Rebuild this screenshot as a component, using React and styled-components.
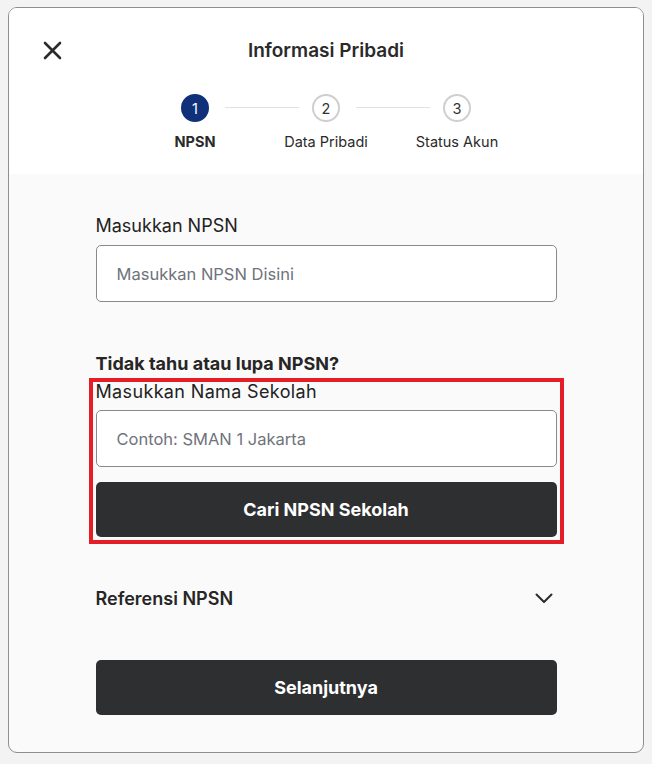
import React from "react";
import styled, { createGlobalStyle } from "styled-components";

const Global = createGlobalStyle`
  * { box-sizing: border-box; }
  html, body { margin: 0; padding: 0; background: #f3f3f3; }
  body { font-family: Inter, "Noto Sans", Arial, sans-serif; color: #222; }
`;

const Page = styled.div`
  padding: 7px 8px 11px;
`;

const Card = styled.div`
  border: 1px solid #8e8e8e;
  border-radius: 9px;
  overflow: hidden;
  background: #fafafa;
`;

const Header = styled.header`
  background: #fff;
  padding: 30px 0 22px;
`;

const TitleRow = styled.div`
  display: grid;
  grid-template-columns: 80px 1fr 80px;
  align-items: center;
  height: 24px;
`;

const CloseButton = styled.button`
  justify-self: start;
  margin-left: 33px;
  width: 20px;
  height: 20px;
  padding: 0;
  border: 0;
  background: none;
  display: flex;
  align-items: center;
  justify-content: center;
  color: #2b2b2b;
  cursor: pointer;
`;

const Title = styled.h1`
  margin: 0;
  text-align: center;
  font-size: 19px;
  font-weight: 600;
  color: #2a2a2a;
`;

const Steps = styled.ol`
  list-style: none;
  margin: 32px 0 0;
  padding: 0;
  display: flex;
  justify-content: center;
`;

const Step = styled.li`
  position: relative;
  width: 131px;
  display: flex;
  flex-direction: column;
  align-items: center;
  gap: 10px;

  &:not(:last-child)::after {
    content: "";
    position: absolute;
    top: 13px;
    left: calc(50% + 30px);
    width: 74px;
    height: 1px;
    background: #e2e2e2;
  }
`;

const Dot = styled.span`
  width: 28px;
  height: 28px;
  border-radius: 50%;
  display: flex;
  align-items: center;
  justify-content: center;
  font-size: 14.5px;
  background: ${(p) => (p.$active ? "#10317a" : "#fff")};
  color: ${(p) => (p.$active ? "#fff" : "#333")};
  border: 2px solid ${(p) => (p.$active ? "#10317a" : "#cfcfcf")};
`;

const StepLabel = styled.span`
  font-size: 14.5px;
  line-height: 20px;
  font-weight: ${(p) => (p.$active ? 700 : 400)};
  color: #2a2a2a;
`;

const Body = styled.main`
  width: 461px;
  margin: 0 auto;
  padding: 40px 0 37px;
  display: flex;
  flex-direction: column;
`;

const Label = styled.label`
  display: block;
  font-size: 18px;
  line-height: 24px;
  color: #222;
`;

const Input = styled.input`
  display: block;
  width: 100%;
  height: 57px;
  margin-top: ${(p) => p.$gap || 7}px;
  padding: 0 20px;
  border: 1px solid #8a8a8e;
  border-radius: 5px;
  background: #fff;
  font-family: inherit;
  font-size: 16.5px;
  color: #222;
  outline: none;

  &::placeholder {
    color: #70737c;
  }
`;

const Question = styled.p`
  margin: 50px 0 0;
  font-size: 18px;
  line-height: 24px;
  font-weight: 700;
  color: #262626;
`;

const SchoolSearch = styled.section`
  margin-top: 9px;
  outline: 4px solid #e51d26;
  outline-offset: 3px;
  display: flex;
  flex-direction: column;
`;

const SchoolLabel = styled(Label)`
  line-height: 14px;
  letter-spacing: 0.35px;
`;

const PrimaryButton = styled.button`
  display: flex;
  align-items: center;
  justify-content: center;
  width: 100%;
  height: 55px;
  margin-top: ${(p) => p.$gap}px;
  border: 0;
  border-radius: 5px;
  background: #2e2f31;
  color: #fff;
  font-family: inherit;
  font-size: 18px;
  font-weight: 700;
  cursor: pointer;
`;

const Accordion = styled.button`
  margin-top: 49px;
  display: flex;
  align-items: center;
  justify-content: space-between;
  width: 100%;
  height: 24px;
  padding: 0 4px 0 0;
  border: 0;
  background: none;
  font-family: inherit;
  font-size: 18px;
  font-weight: 600;
  color: #262626;
  cursor: pointer;
`;

const Chevron = () => (
  <svg width="18" height="11" viewBox="0 0 18 11" fill="none">
    <path d="M1.5 1.5L9 9l7.5-7.5" stroke="#2b2b2b" strokeWidth="2" strokeLinecap="round" strokeLinejoin="round" />
  </svg>
);

const CloseIcon = () => (
  <svg width="19" height="19" viewBox="0 0 19 19" fill="none">
    <path d="M2 2l15 15M17 2L2 17" stroke="currentColor" strokeWidth="2.6" strokeLinecap="round" />
  </svg>
);

const steps = [
  { n: 1, label: "NPSN", active: true },
  { n: 2, label: "Data Pribadi" },
  { n: 3, label: "Status Akun" },
];

export default function App() {
  return (
    <>
      <Global />
      <Page>
        <Card>
          <Header>
            <TitleRow>
              <CloseButton aria-label="Tutup">
                <CloseIcon />
              </CloseButton>
              <Title>Informasi Pribadi</Title>
              <span />
            </TitleRow>
            <Steps>
              {steps.map((s) => (
                <Step key={s.n}>
                  <Dot $active={s.active}>{s.n}</Dot>
                  <StepLabel $active={s.active}>{s.label}</StepLabel>
                </Step>
              ))}
            </Steps>
          </Header>
          <Body>
            <Label htmlFor="npsn">Masukkan NPSN</Label>
            <Input id="npsn" placeholder="Masukkan NPSN Disini" />
            <Question>Tidak tahu atau lupa NPSN?</Question>
            <SchoolSearch>
              <SchoolLabel htmlFor="sekolah">Masukkan Nama Sekolah</SchoolLabel>
              <Input id="sekolah" $gap={11} placeholder="Contoh: SMAN 1 Jakarta" />
              <PrimaryButton $gap={15}>Cari NPSN Sekolah</PrimaryButton>
            </SchoolSearch>
            <Accordion>
              Referensi NPSN
              <Chevron />
            </Accordion>
            <PrimaryButton $gap={50}>Selanjutnya</PrimaryButton>
          </Body>
        </Card>
      </Page>
    </>
  );
}
